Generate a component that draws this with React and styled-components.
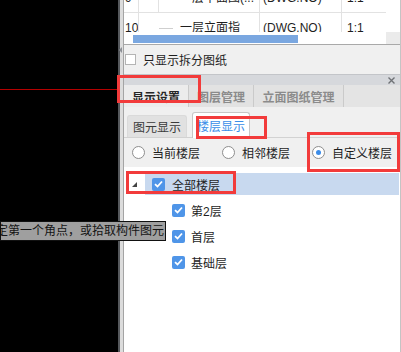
import styled, { createGlobalStyle } from "styled-components";

const GlobalStyle = createGlobalStyle`
  html, body {
    margin: 0;
    padding: 0;
  }
  body {
    width: 401px;
    height: 352px;
    overflow: hidden;
    font-family: "Liberation Sans", "Noto Sans CJK SC", sans-serif;
    font-size: 12px;
    color: #1e1e1e;
  }
`;

const Screen = styled.div`
  position: relative;
  display: flex;
  width: 401px;
  height: 352px;
  overflow: hidden;
`;

const Canvas = styled.div`
  position: relative;
  width: 118px;
  flex: none;
  background: #000;
`;

const RedLine = styled.div`
  position: absolute;
  left: 0;
  right: 0;
  top: 89px;
  height: 1px;
  background: #b40000;
`;

const Splitter = styled.div`
  position: relative;
  display: flex;
  width: 5px;
  flex: none;
`;

const SplitDark = styled.div`
  width: 2px;
  background: #55585c;
`;

const SplitLight = styled.div`
  flex: 1;
  background: #dcdcdc;
`;

const SplitArrow = styled.div`
  position: absolute;
  left: 1px;
  top: 47px;
  width: 0;
  height: 0;
  border-top: 3px solid transparent;
  border-bottom: 3px solid transparent;
  border-right: 3px solid #8d9096;
`;

const Panel = styled.div`
  flex: 1;
  display: flex;
  flex-direction: column;
  min-width: 0;
  background: #f0f0f0;
  border-left: 1px solid #a4a4a4;
  border-right: 1px solid #c4c4c4;
`;

/* ---- drawing list table ---- */

const Table = styled.div`
  background: #fff;
  border-bottom: 1px solid #a9a9a9;
`;

const TableBody = styled.div`
  height: 32px;
  overflow: hidden;
`;

const Rows = styled.div`
  margin-top: -17px;
`;

const Row = styled.div`
  display: grid;
  grid-template-columns: 15px 20px 101px 82px 44px 14px;
  height: 30px;
`;

const Cell = styled.div`
  box-sizing: border-box;
  height: 30px;
  line-height: 30px;
  white-space: nowrap;
  overflow: hidden;
  padding-left: ${(p) => p.$pad || 0}px;
  border-right: ${(p) => (p.$line ? "1px solid #e2e2e2" : "none")};
  border-bottom: ${(p) => (p.$bottom ? "1px solid #e2e2e2" : "none")};
`;

const Connector = styled.span`
  display: inline-block;
  vertical-align: middle;
  width: 14px;
  height: 1px;
  margin-right: 7px;
  background: ${(p) => (p.$hidden ? "transparent" : "#cfcfcf")};
`;

const ScrollRow = styled.div`
  display: flex;
  height: 12px;
`;

const ScrollTrack = styled.div`
  flex: 1;
  padding: 3px 0 1px 9px;
`;

const ScrollThumb = styled.div`
  width: 165px;
  height: 8px;
  background: #7aa7e0;
`;

const ScrollCorner = styled.div`
  width: 14px;
  background: #ebebeb;
`;

/* ---- option row ---- */

const OptionRow = styled.label`
  display: flex;
  align-items: center;
  gap: 7px;
  height: 29px;
  padding-left: 1px;
`;

const PlainBox = styled.span`
  box-sizing: border-box;
  width: 11px;
  height: 11px;
  background: #fff;
  border: 1px solid #b4b4b4;
`;

/* ---- docked panel ---- */

const DockHeader = styled.div`
  display: flex;
  justify-content: flex-end;
  align-items: center;
  height: 10px;
  padding-right: 5px;
  border-top: 1px solid #c3c5c9;
  background: #d6d8dc;
`;

const TabBar = styled.div`
  display: flex;
  height: 22px;
  background: #e4e4e4;
`;

const Tab = styled.div`
  box-sizing: border-box;
  width: ${(p) => p.$w}px;
  display: flex;
  align-items: center;
  justify-content: center;
  font-weight: bold;
  font-size: 12px;
  color: ${(p) => (p.$active ? "#262626" : "#8b8b8b")};
  background: ${(p) => (p.$active ? "#ececec" : "#e2e2e2")};
  border-right: 1px solid #cacaca;
`;

const SubTabBar = styled.div`
  box-sizing: border-box;
  display: flex;
  align-items: flex-end;
  gap: 5px;
  height: 31px;
  padding-left: 3px;
  border-bottom: 1px solid #d2d2d2;
`;

const SubTab = styled.div`
  box-sizing: border-box;
  width: ${(p) => (p.$active ? 58 : 60)}px;
  height: ${(p) => (p.$active ? 26 : 22)}px;
  margin-bottom: ${(p) => (p.$active ? -1 : 0)}px;
  display: flex;
  align-items: center;
  justify-content: center;
  color: ${(p) => (p.$active ? "#3a8ee8" : "#3a3a3a")};
  background: ${(p) => (p.$active ? "#fff" : "#e1e1e1")};
  border: 1px solid ${(p) => (p.$active ? "#c6c6c6" : "#dadada")};
  border-bottom: none;
  border-radius: 3px 3px 0 0;
`;

const RadioRow = styled.div`
  display: flex;
  align-items: center;
  gap: 22px;
  height: 29px;
  padding-left: 8px;
`;

const RadioItem = styled.label`
  display: flex;
  align-items: center;
  gap: 7px;
`;

const Radio = styled.span`
  box-sizing: border-box;
  width: 13px;
  height: 13px;
  border-radius: 50%;
  border: 1px solid #8e8e8e;
  background: #fff;
  display: flex;
  align-items: center;
  justify-content: center;
  &::after {
    content: "";
    display: ${(p) => (p.$on ? "block" : "none")};
    width: 5px;
    height: 5px;
    border-radius: 50%;
    background: #3b8ce8;
  }
`;

/* ---- floor tree ---- */

const Tree = styled.div`
  flex: 1;
  display: flex;
  flex-direction: column;
  gap: 4px;
  padding-top: 6px;
  background: #fff;
`;

const RootRow = styled.div`
  display: flex;
  align-items: center;
  height: 22px;
  padding-left: 8px;
`;

const Expander = styled.span`
  width: 13px;
  display: flex;
  align-items: center;
  &::before {
    content: "";
    width: 0;
    height: 0;
    border-left: 5px solid transparent;
    border-bottom: 5px solid #444;
  }
`;

const Highlight = styled.div`
  flex: 1;
  display: flex;
  align-items: center;
  gap: 7px;
  height: 22px;
  padding-left: 7px;
  margin-right: 1px;
  background: #c8d9ef;
`;

const ChildRow = styled.div`
  display: flex;
  align-items: center;
  gap: 6px;
  height: 22px;
  padding-left: 48px;
`;

const BlueBox = styled.span`
  width: 13px;
  height: 13px;
  border-radius: 2px;
  background: #4f95e8;
  display: flex;
  align-items: center;
  justify-content: center;
`;

/* ---- overlays ---- */

const Tooltip = styled.div`
  position: absolute;
  left: 0;
  top: 221px;
  box-sizing: border-box;
  width: 166px;
  height: 20px;
  background: #9f9f9f;
  border: 1px solid #111;
  overflow: hidden;
  white-space: nowrap;
  line-height: 18px;
  color: #141414;
`;

const TipText = styled.span`
  display: inline-block;
  margin-left: -17px;
`;

const Mark = styled.div`
  position: absolute;
  box-sizing: border-box;
  border: 3px solid #f23b3b;
  pointer-events: none;
`;

function Check() {
  return (
    <svg width="9" height="8" viewBox="0 0 9 8">
      <path d="M1 4.2 L3.5 6.5 L8 1.5" fill="none" stroke="#fff" strokeWidth="1.8" />
    </svg>
  );
}

function CloseIcon() {
  return (
    <svg width="7" height="7" viewBox="0 0 7 7">
      <path d="M0.5 0.5 L6.5 6.5 M6.5 0.5 L0.5 6.5" stroke="#6f7276" strokeWidth="1.4" />
    </svg>
  );
}

const drawings = [
  { no: "9", name: "一层平面图(...", code: "(DWG.NO)", scale: "1:1", split: true },
  { no: "10", name: "一层立面指", code: "(DWG.NO)", scale: "1:1", branch: true },
];

const floors = ["第2层", "首层", "基础层"];

export default function App() {
  return (
    <>
      <GlobalStyle />
      <Screen>
        <Canvas>
          <RedLine />
        </Canvas>
        <Splitter>
          <SplitDark />
          <SplitLight />
          <SplitArrow />
        </Splitter>
        <Panel>
          <Table>
            <TableBody>
              <Rows>
                {drawings.map((d) => (
                  <Row key={d.no}>
                    <Cell $line $bottom={d.split} $pad={1}>{d.no}</Cell>
                    <Cell $line={d.split} $bottom={d.split} />
                    <Cell $line $bottom={d.split}>
                      <Connector $hidden={!d.branch} />
                      {d.name}
                    </Cell>
                    <Cell $line $bottom={d.split} $pad={3}>{d.code}</Cell>
                    <Cell $bottom={d.split} $pad={5}>{d.scale}</Cell>
                    <Cell />
                  </Row>
                ))}
              </Rows>
            </TableBody>
            <ScrollRow>
              <ScrollTrack>
                <ScrollThumb />
              </ScrollTrack>
              <ScrollCorner />
            </ScrollRow>
          </Table>

          <OptionRow>
            <PlainBox />
            只显示拆分图纸
          </OptionRow>

          <DockHeader>
            <CloseIcon />
          </DockHeader>
          <TabBar>
            <Tab $w={65} $active>显示设置</Tab>
            <Tab $w={65}>图层管理</Tab>
            <Tab $w={90}>立面图纸管理</Tab>
          </TabBar>

          <SubTabBar>
            <SubTab>图元显示</SubTab>
            <SubTab $active>楼层显示</SubTab>
          </SubTabBar>

          <RadioRow>
            <RadioItem><Radio />当前楼层</RadioItem>
            <RadioItem><Radio />相邻楼层</RadioItem>
            <RadioItem><Radio $on />自定义楼层</RadioItem>
          </RadioRow>

          <Tree>
            <RootRow>
              <Expander />
              <Highlight>
                <BlueBox><Check /></BlueBox>
                全部楼层
              </Highlight>
            </RootRow>
            {floors.map((f) => (
              <ChildRow key={f}>
                <BlueBox><Check /></BlueBox>
                {f}
              </ChildRow>
            ))}
          </Tree>
        </Panel>

        <Tooltip>
          <TipText>指定第一个角点，或拾取构件图元</TipText>
        </Tooltip>

        <Mark style={{ left: 117, top: 75, width: 84, height: 28 }} />
        <Mark style={{ left: 196, top: 116, width: 71, height: 23 }} />
        <Mark style={{ left: 307, top: 132, width: 93, height: 40 }} />
        <Mark style={{ left: 126, top: 171, width: 110, height: 23 }} />
      </Screen>
    </>
  );
}
